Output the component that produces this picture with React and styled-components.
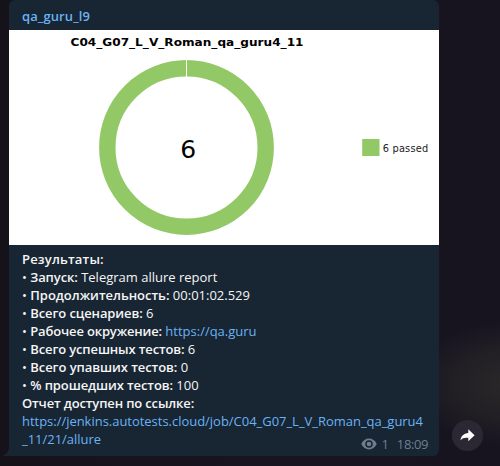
import React from 'react';
import styled, { createGlobalStyle } from 'styled-components';

const GlobalStyle = createGlobalStyle`
  html, body { margin: 0; padding: 0; }
  body { background: #171420; overflow: hidden; }
`;

const Chat = styled.main`
  display: flex;
  align-items: flex-start;
  box-sizing: border-box;
  width: 500px;
  height: 466px;
  padding-left: 9px;
  overflow: hidden;
  font: 13px/18px 'Open Sans', 'Noto Sans', sans-serif;
  background:
    radial-gradient(ellipse 100px 62px at 510px 384px, #2b2829 0%, rgba(43, 40, 41, 0.6) 50%, transparent 100%),
    linear-gradient(90deg, #15121a 0%, #191520 50%, #171420 100%);
`;

const Bubble = styled.article`
  position: relative;
  display: flex;
  flex-direction: column;
  width: 430px;
  height: 456px;
  background: #182533;
  border-radius: 6px 6px 6px 0;
`;

const Tail = styled.svg`
  position: absolute;
  left: -6px;
  bottom: 0;
`;

const Sender = styled.header`
  box-sizing: border-box;
  height: 30px;
  padding: 7px 13px 0;
  color: #6ab3f3;
  font-weight: 600;
  letter-spacing: 0.1px;
`;

const Chart = styled.svg`
  display: block;
  flex: none;
  background: #fff;
  font-family: 'DejaVu Sans', sans-serif;
`;

const Body = styled.div`
  padding: 5px 13px 0;
  color: #f5f5f5;
`;

const Line = styled.div`
  height: 18px;
  white-space: nowrap;
`;

const Label = styled.b`
  font-weight: 600;
  letter-spacing: ${({ $tracking = 0 }) => $tracking}px;
`;

const Link = styled.a`
  color: #6ab3f3;
  text-decoration: none;
`;

const ReportLink = styled(Link)`
  letter-spacing: -0.025px;
`;

const LastLine = styled(Line)`
  display: flex;
  justify-content: space-between;
`;

const Meta = styled.span`
  display: flex;
  align-items: center;
  height: 18px;
  margin: 5px -2px 0 0;
  color: #6d7f8f;
`;

const Views = styled.span`
  margin: 0 8px 0 4px;
`;

const Time = styled.span`
  letter-spacing: -0.4px;
`;

const ShareButton = styled.button`
  display: flex;
  align-items: center;
  justify-content: center;
  box-sizing: border-box;
  width: 31px;
  height: 31px;
  margin: 420px 0 0 13px;
  padding: 0 1px 1px 0;
  border: 0;
  border-radius: 50%;
  background: #2c2833;
`;

const results = [
  { label: 'Запуск', value: 'Telegram allure report', tracking: -0.1 },
  { label: 'Продолжительность', value: '00:01:02.529', tracking: -0.02 },
  { label: 'Всего сценариев', value: '6', tracking: -0.1 },
  { label: 'Рабочее окружение', value: 'https://qa.guru', tracking: -0.16, link: true },
  { label: 'Всего успешных тестов', value: '6', tracking: -0.13 },
  { label: 'Всего упавших тестов', value: '0', tracking: -0.06 },
  { label: '% прошедших тестов', value: '100', tracking: -0.1 },
];

function ResultChart() {
  return (
    <Chart width="430" height="215" viewBox="0 0 430 215">
      <text x="61.5" y="15.7" fontSize="11.3" fontWeight="700" textLength="233" lengthAdjust="spacingAndGlyphs">
        C04_G07_L_V_Roman_qa_guru4_11
      </text>
      <circle cx="177.5" cy="117.5" r="79.2" fill="none" stroke="#92c966" strokeWidth="16.4" />
      <path d="M177.5 30v18" stroke="#fff" strokeWidth="1" />
      <text x="179.3" y="127.5" fontSize="25" textAnchor="middle">6</text>
      <rect x="353.2" y="109" width="17.3" height="17" fill="#92c966" />
      <text x="373.7" y="122.3" fontSize="9.8" fill="#222" textLength="45.5" lengthAdjust="spacing">6 passed</text>
    </Chart>
  );
}

export default function App() {
  return (
    <>
      <GlobalStyle />
      <Chat>
        <Bubble>
          <Tail width="7" height="9" viewBox="0 0 7 9">
            <path d="M6 0H7V9H0V8.5Q6 6 6 0Z" fill="#182533" />
          </Tail>
          <Sender>qa_guru_l9</Sender>
          <ResultChart />
          <Body>
            <Line><Label $tracking={0.18}>Результаты:</Label></Line>
            {results.map(({ label, value, tracking, link }) => (
              <Line key={label}>
                • <Label $tracking={tracking}>{label}:</Label> {link ? <Link href="#">{value}</Link> : value}
              </Line>
            ))}
            <Line><Label $tracking={-0.14}>Отчет доступен по ссылке:</Label></Line>
            <Line><ReportLink href="#">https://jenkins.autotests.cloud/job/C04_G07_L_V_Roman_qa_guru4</ReportLink></Line>
            <LastLine>
              <ReportLink href="#">_11/21/allure</ReportLink>
              <Meta>
                <svg width="16" height="12" viewBox="0 0 16 12">
                  <path d="M0.3 6C3.3-1.4 12.7-1.4 15.7 6C12.7 13.2 3.3 13.2 0.3 6Z" fill="#6d7f8f" />
                  <circle cx="8" cy="6" r="3.8" fill="#182533" />
                  <circle cx="8" cy="6" r="2.3" fill="#6d7f8f" />
                </svg>
                <Views>1</Views>
                <Time>18:09</Time>
              </Meta>
            </LastLine>
          </Body>
        </Bubble>
        <ShareButton aria-label="Share">
          <svg width="15" height="13" viewBox="0 0 15 13">
            <path d="M8.3 0.2L14.6 6.2L8.3 12.2V8.8C4.6 8.4 2.2 9.2 0.5 11.2C1 7.2 3.6 4.4 8.3 3.9Z" fill="#fff" />
          </svg>
        </ShareButton>
      </Chat>
    </>
  );
}
